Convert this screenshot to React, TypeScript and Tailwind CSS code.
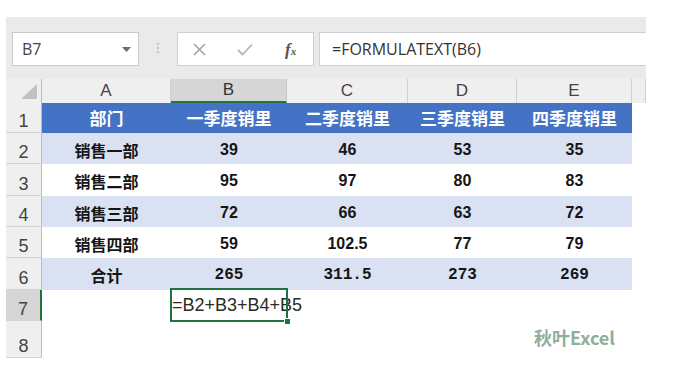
import React from "react";

const colW = ["w-[129px]", "w-[116px]", "w-[121px]", "w-[109px]", "w-[115px]"];
const colLetters = ["A", "B", "C", "D", "E"];

const header = ["部门", "一季度销里", "二季度销里", "三季度销里", "四季度销里"];
const body = [
  ["销售一部", "39", "46", "53", "35"],
  ["销售二部", "95", "97", "80", "83"],
  ["销售三部", "72", "66", "63", "72"],
  ["销售四部", "59", "102.5", "77", "79"],
];
const total = ["合计", "265", "311.5", "273", "269"];

const rowH = ["h-[30px]", "h-[31px]", "h-[32px]", "h-[31px]", "h-[31px]", "h-[32px]", "h-[31px]", "h-[37px]"];

const cjk = "font-['Noto_Sans_CJK_SC',sans-serif]";

function RowHead({ n, selected }: { n: number; selected?: boolean }) {
  return (
    <div
      className={
        selected
          ? "flex w-[36px] shrink-0 items-end justify-center border-r-2 border-b border-r-[#217346] border-b-[#d4d4d4] bg-[#d6d6d6] pb-[1px] text-[18px] leading-[20px] text-[#444] font-['Liberation_Sans',sans-serif]"
          : "flex w-[36px] shrink-0 items-end justify-center border-r border-b border-r-[#bdbdbd] border-b-[#d4d4d4] bg-[#efefef] pb-[1px] text-[18px] leading-[20px] text-[#444] font-['Liberation_Sans',sans-serif]"
      }
    >
      {n}
    </div>
  );
}

function Toolbar() {
  return (
    <div className="flex h-[62px] items-start bg-[#eaeaea] pl-[6px] pt-[15px]">
      {/* Name box */}
      <div className="flex h-[34px] w-[127px] items-center justify-between border border-[#c9c9c9] bg-white pl-[9px] pr-[7px]">
        <span className="text-[16px] text-[#444] font-['Open_Sans',sans-serif]">B7</span>
        <svg width="9" height="5" viewBox="0 0 9 5">
          <path d="M0 0 L9 0 L4.5 5 Z" fill="#6b6b6b" />
        </svg>
      </div>
      {/* Separator dots */}
      <div className="flex w-[38px] flex-col items-center gap-[2px] pt-[11px]">
        <span className="h-[2px] w-[2px] rounded-full bg-[#b3b3b3]" />
        <span className="h-[2px] w-[2px] rounded-full bg-[#b3b3b3]" />
        <span className="h-[2px] w-[2px] rounded-full bg-[#b3b3b3]" />
      </div>
      {/* Cancel / enter / fx */}
      <div className="flex h-[34px] w-[137px] items-center border border-[#d0d0d0] bg-white">
        <svg className="ml-[15px]" width="13" height="13" viewBox="0 0 13 13">
          <path d="M1 1 L12 12 M12 1 L1 12" stroke="#a3a3a3" strokeWidth="1.6" fill="none" />
        </svg>
        <svg className="ml-[31px]" width="16" height="13" viewBox="0 0 16 13">
          <path d="M1 7 L5.5 11.5 L15 1.5" stroke="#b5b5b5" strokeWidth="1.8" fill="none" />
        </svg>
        <span className="ml-[32px] text-[17px] font-bold italic leading-none text-[#555] font-['Liberation_Serif',serif]">
          f<span className="text-[11px]">x</span>
        </span>
      </div>
      {/* Formula input */}
      <div className="ml-[5px] flex h-[34px] flex-1 items-center border-y border-l border-[#d0d0d0] bg-white pl-[12px]">
        <span className="text-[16px] text-[#333] font-['Open_Sans',sans-serif]">=FORMULATEXT(B6)</span>
      </div>
    </div>
  );
}

function ColumnHeader() {
  return (
    <div className="flex h-[24px] bg-[#eaeaea]">
      <div className="flex w-[36px] shrink-0 items-end justify-end border-r border-[#bdbdbd] bg-[#efefef] pb-[4px] pr-[4px]">
        <svg width="16" height="15" viewBox="0 0 16 15">
          <path d="M0 15 L16 15 L16 0 Z" fill="#c2c2c2" />
        </svg>
      </div>
      {colLetters.map((c, i) => (
        <div
          key={c}
          className={
            i === 1
              ? `${colW[i]} flex shrink-0 items-center justify-center border-r border-b-2 border-r-[#c6c6c6] border-b-[#217346] bg-[#d6d6d6] text-[17px] text-[#333] font-['Liberation_Sans',sans-serif]`
              : `${colW[i]} flex shrink-0 items-center justify-center border-r border-[#d0d0d0] bg-[#efefef] text-[17px] text-[#444] font-['Liberation_Sans',sans-serif]`
          }
        >
          {c}
        </div>
      ))}
      <div className="w-[14px] shrink-0 border-r border-[#d0d0d0] bg-[#efefef]" />
    </div>
  );
}

export default function App() {
  return (
    <div className="h-[374px] w-[678px] overflow-hidden bg-white pl-[6px] pt-[17px]">
      <div className="w-[640px]">
        <Toolbar />
        <ColumnHeader />

        {/* Row 1: blue header */}
        <div className={`flex ${rowH[0]}`}>
          <RowHead n={1} />
          {header.map((h, i) => (
            <div
              key={i}
              className={`${colW[i]} flex shrink-0 items-center justify-center bg-[#4472c4] text-[17px] font-bold text-white ${cjk}`}
            >
              {h}
            </div>
          ))}
        </div>

        {/* Rows 2-5 */}
        {body.map((r, ri) => (
          <div key={ri} className={`flex ${rowH[ri + 1]}`}>
            <RowHead n={ri + 2} />
            {r.map((v, i) => (
              <div
                key={i}
                className={
                  (ri % 2 === 0 ? "bg-[#d9e1f2] " : "bg-white ") +
                  `${colW[i]} flex shrink-0 items-center justify-center pt-[2px] text-[16px] font-bold text-[#151515] ` +
                  (i === 0 ? cjk : "font-['Liberation_Sans',sans-serif]")
                }
              >
                {v}
              </div>
            ))}
          </div>
        ))}

        {/* Row 6: totals */}
        <div className={`flex ${rowH[5]}`}>
          <RowHead n={6} />
          {total.map((v, i) => (
            <div
              key={i}
              className={
                `${colW[i]} flex shrink-0 items-center justify-center bg-[#d9e1f2] pt-[1px] text-[16px] font-bold text-[#151515] ` +
                (i === 0 ? cjk : "font-['Liberation_Mono',monospace]")
              }
            >
              {v}
            </div>
          ))}
        </div>

        {/* Row 7: selected B7 */}
        <div className={`flex ${rowH[6]}`}>
          <RowHead n={7} selected />
          <div className={`${colW[0]} shrink-0`} />
          <div className={`${colW[1]} relative flex shrink-0 items-center`}>
            <span className="whitespace-nowrap pl-[1px] text-[18px] text-[#2b2b22] font-['Liberation_Sans',sans-serif]">
              =B2+B3+B4+B5
            </span>
            <div className="absolute -bottom-[1px] -left-[1px] -right-[1px] -top-[2px] border-2 border-[#217346]" />
            <div className="absolute -bottom-[4px] -right-[4px] h-[7px] w-[7px] border border-white bg-[#217346]" />
          </div>
        </div>

        {/* Row 8 */}
        <div className={`flex ${rowH[7]}`}>
          <RowHead n={8} />
          <div className={`${colW[0]} shrink-0`} />
          <div className={`${colW[1]} shrink-0`} />
          <div className={`${colW[2]} shrink-0`} />
          <div className={`${colW[3]} shrink-0`} />
          <div className={`${colW[4]} flex shrink-0 items-center justify-center pb-[4px]`}>
            <span className={`text-[18px] font-bold text-[#8fae9b] ${cjk}`}>秋叶Excel</span>
          </div>
        </div>
      </div>
    </div>
  );
}
